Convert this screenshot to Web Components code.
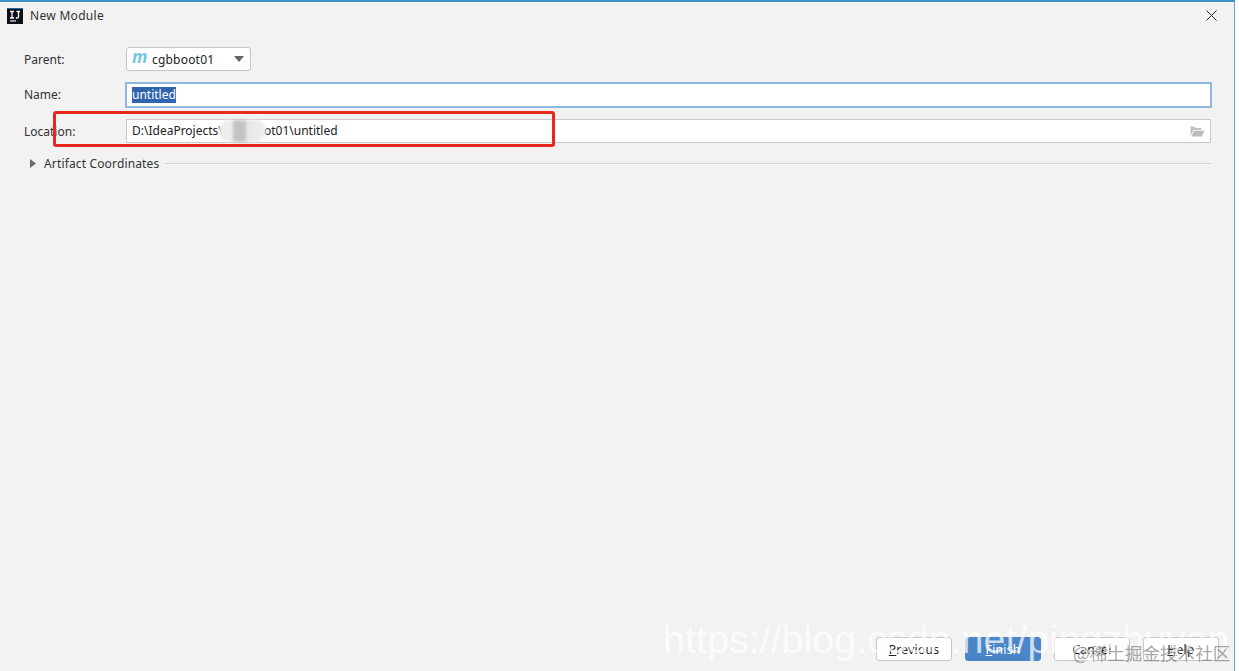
<!DOCTYPE html>
<html><head><meta charset="utf-8"><style>
html,body{margin:0;height:100%;background:#fff;overflow:hidden}
body{font:12px "Noto Sans",sans-serif;color:#1c1c1c}
</style></head><body>
<x-dialog title="New Module">
<x-row label="Parent:" style="--top:18px"><x-combo value="cgbboot01"></x-combo></x-row>
<x-row label="Name:" style="--top:11px;--lift:2px"><x-input selected>untitled</x-input></x-row>
<x-row label="Location:" style="--top:11px"><x-input folder>D:\IdeaProjects<span style="letter-spacing:1.2px">\cgbb</span>oot01\untitled</x-input></x-row>
<x-section label="Artifact Coordinates"></x-section>
<x-button slot="footer" label="Previous" mn="0"></x-button>
<x-button slot="footer" label="Finish" mn="0" primary></x-button>
<x-button slot="footer" label="Cancel"></x-button>
<x-button slot="footer" label="Help" mn="0"></x-button>
</x-dialog>
<script>
function def(name,html){customElements.define(name,class extends HTMLElement{connectedCallback(){if(this.shadowRoot)return;const r=this.attachShadow({mode:'open'});r.innerHTML=typeof html==='function'?html(this):html;}});}
const esc=s=>String(s).replace(/&/g,'&amp;').replace(/</g,'&lt;');
def('x-dialog',h=>`<style>
:host{display:flex;flex-direction:column;position:relative;box-sizing:border-box;width:1235px;height:671px;background:#f2f2f2;border-top:2px solid #3b93c8;border-right:1px solid #5aa5d2;overflow:hidden}
.bar{display:flex;align-items:center;height:27px;padding:0 0 0 7px;flex:none}
.name{margin-left:7px;font-size:12px;color:#333;letter-spacing:.3px}
.x{margin-left:auto;margin-right:17px}
.body{flex:1;padding:0 23px 0 24px;display:flex;flex-direction:column}
.foot{display:flex;justify-content:flex-end;gap:13px;padding:0 15px 10px 0}
.red{position:absolute;left:53px;top:109px;width:496px;height:30px;border:3px solid #e8281e;border-radius:3px;pointer-events:none}
.smudge{position:absolute;left:219px;top:118px;width:47px;height:22px;border-radius:10px;background:linear-gradient(90deg,#ededed 0,#ededed 30%,#c4c4c4 30%,#c4c4c4 58%,#e6e6e6 58%,#f0f0f0 100%);filter:blur(1.5px)}
.wm{position:absolute;left:663px;top:615px;font:39.5px "Liberation Sans",sans-serif;color:rgba(255,255,255,.72);white-space:nowrap;pointer-events:none}
.jj{position:absolute;left:1073px;top:638px;font:17.6px "Noto Sans CJK SC",sans-serif;color:rgba(110,110,110,.62);white-space:nowrap;pointer-events:none}
</style>
<div class="bar">
<svg width="16" height="16" viewBox="0 0 16 16"><rect width="16" height="16" fill="#0d1117"/><rect y="0" width="16" height="1" fill="#1b6ea8"/><path d="M3 3.5h4M5 3.5v6.5M3 10h4M9.5 3.5h3.5M11.5 3.5v5.2c0 1.4-1.600 1.600-2.600.9" fill="none" stroke="#fff" stroke-width="1.3"/><rect x="3" y="12.400" width="6" height="1.100" fill="#fff"/></svg>
<span class="name">${esc(h.getAttribute('title'))}</span>
<svg class="x" width="11" height="11" viewBox="0 0 11 11"><path d="M.5.5l10 10M10.500.5l-10 10" stroke="#222" stroke-width="1" fill="none"/></svg>
</div>
<div class="body"><slot></slot></div>
<div class="foot"><slot name="footer"></slot></div>
<div class="smudge"></div><div class="red"></div>
<div class="wm">https://blog.csdn.net/pingzhuyan</div>
<div class="jj">@稀土掘金技术社区</div>`);
def('x-row',h=>`<style>
:host{display:flex;align-items:center;margin-top:var(--top,0)}
label{width:102px;flex:none;font-size:12px;color:#333;padding-bottom:var(--lift,0)}
.c{flex:1;min-width:0;display:flex}
</style><label>${esc(h.getAttribute('label'))}</label><div class="c"><slot></slot></div>`);
def('x-combo',h=>`<style>
:host{display:flex;align-items:center;box-sizing:border-box;width:125px;height:24px;background:#fff;border:1px solid #c6c6c6;border-radius:3px;padding:0 0 0 5px}
.m{font:italic bold 17px "Noto Sans",sans-serif;color:#6fc7dc;width:20px;line-height:18px;margin-top:-4px}
.t{color:#222;letter-spacing:.2px}
svg{margin-left:auto;margin-right:6px}
</style><span class="m">m</span><span class="t">${esc(h.getAttribute('value'))}</span><svg width="10" height="6" viewBox="0 0 10 6"><path d="M0 0h10L5 6z" fill="#666"/></svg>`);
def('x-input',h=>{const sel=h.hasAttribute('selected');return `<style>
:host{display:flex;align-items:center;flex:1;box-sizing:border-box;height:24px;background:#fff;border:1px solid #c9c9c9;padding:0 5px 0 5px;${sel?'height:26px;border:2px solid #8fb8e0;padding-left:5px;margin:0 -1px;':''}}
.t{color:#222;${sel?'':'padding-bottom:2px;'}}
.s{background:#2f65ac;color:#fff;display:inline-block;line-height:16px}
svg{margin-left:auto}
</style><span class="t${sel?' s':''}"><slot></slot></span>${h.hasAttribute('folder')?`<svg width="15" height="12" viewBox="0 0 15 12"><path d="M.5 11V1.500h4l1 1.500h6v2H3.500L.5 11z" fill="#c4c4c4"/><path d="M1.500 11.500L4 5.800h10.500L12 11.500z" fill="#bcbcbc"/></svg>`:''}`;});
def('x-section',h=>`<style>
:host{display:flex;align-items:center;margin-top:11px;height:18px;color:#333}
svg{margin:0 8px 0 6px;flex:none}
span{letter-spacing:.15px}
i{flex:1;height:1px;background:#d3d3d3;margin-left:6px}
</style><svg width="6" height="9" viewBox="0 0 6 9"><path d="M0 0l6 4.500L0 9z" fill="#6b6b6b"/></svg><span>${esc(h.getAttribute('label'))}</span><i></i>`);
def('x-button',h=>{const l=h.getAttribute('label'),p=h.hasAttribute('primary'),mn=h.getAttribute('mn');
const t=mn===null?esc(l):`${esc(l.slice(0,+mn))}<u>${esc(l[+mn])}</u>${esc(l.slice(+mn+1))}`;
return `<style>
:host{display:flex;align-items:center;justify-content:center;box-sizing:border-box;width:76px;height:24px;border-radius:3px;font-size:12px;letter-spacing:.3px;background:${p?'#4a86c7':'#fff'};color:${p?'#fff':'#222'};border:1px solid ${p?'#4a86c7':'#c8c8c8'}}
</style><span>${t}</span>`});
</script>
</body></html>
